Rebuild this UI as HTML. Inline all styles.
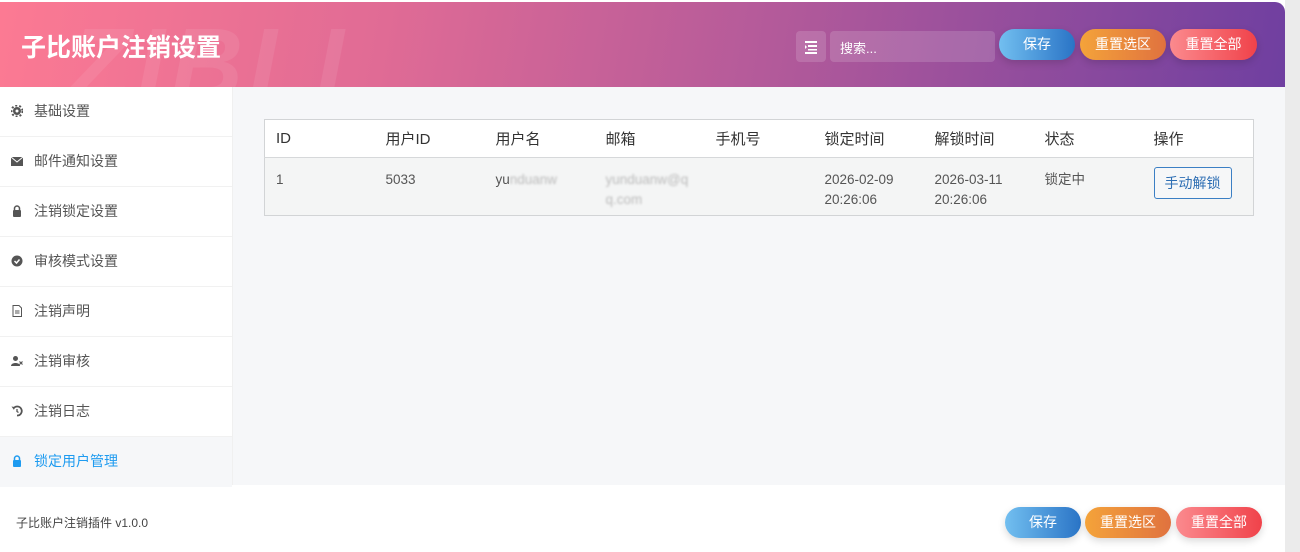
<!DOCTYPE html>
<html><head><meta charset="utf-8"><style>
*{box-sizing:border-box;margin:0;padding:0}
body{width:1300px;height:552px;background:#ebebeb;font-family:"Liberation Sans","Noto Sans CJK SC",sans-serif;position:relative;overflow:hidden}
.wrap{position:absolute;left:0;top:0;width:1285px;height:552px;background:#fff}
.hdr{position:absolute;left:0;top:2px;width:1285px;height:85px;border-radius:0 10px 0 0;background:linear-gradient(100deg,#fc7a93 0%,#e06b95 30%,#b35a9a 60%,#6f3fa0 100%);overflow:hidden}
.hdr h1{position:absolute;left:21px;top:26px;color:#fff;font-size:25px;font-weight:bold}
.wm{position:absolute;left:70px;top:12px;font-size:100px;line-height:100px;font-weight:900;font-style:italic;color:rgba(255,255,255,.08);letter-spacing:6px}
.ib{position:absolute;left:796px;top:29px;width:30px;height:31px;border-radius:4px;background:rgba(255,255,255,.15)}
.srch{position:absolute;left:830px;top:29px;width:165px;height:31px;border-radius:4px;background:rgba(255,255,255,.15);color:#fff;font-size:13px;padding:7px 10px}
.btn{position:absolute;height:31px;border-radius:16px;color:#fff;font-size:14px;text-align:center;line-height:31px;box-shadow:0 3px 8px rgba(0,0,0,.15)}
.b1{background:linear-gradient(90deg,#72bff0,#2a74c6)}
.b2{background:linear-gradient(90deg,#f4a33a,#e0723f)}
.b3{background:linear-gradient(90deg,#fb8a8e,#f0424a)}
.side{position:absolute;left:0;top:87px;width:233px;height:398px;background:#fff;border-right:1px solid #f0f0f0}
.it{height:50px;border-bottom:1px solid #f1f1f1;font-size:14px;color:#555;line-height:49px;padding-left:34px;position:relative}
.it .ic{position:absolute;left:11px;top:18px;width:12px;height:12px}
.it.act{background:#f6f7f9;color:#1e9bf0;border-bottom:none}
.main{position:absolute;left:233px;top:87px;width:1052px;height:398px;background:#f6f7f9}
table{position:absolute;left:31px;top:32px;width:990px;border-collapse:collapse;border:1px solid #d2d4d6;font-size:14px;color:#444}
th{background:#fff;font-weight:normal;text-align:left;height:38px;padding-left:11px;font-size:15px;color:#333;border-bottom:1px solid #d6d8da}
td{background:#f4f5f5;vertical-align:top;padding:12px 0 0 11px;height:58px;line-height:20px;font-size:13.5px;color:#555}
.ub{display:inline-block;border:1px solid #3b7fc4;color:#2f6fb4;border-radius:3px;padding:5px 10px;font-size:14px;background:#f6f7f8;margin-top:-3px}
.blur{color:#bbb;filter:blur(1px)}
.foot{position:absolute;left:16px;top:514px;font-size:12px;color:#444}
</style></head><body>
<div class="wrap">
<div class="hdr"><div class="wm">ZIBLL</div><h1>子比账户注销设置</h1>
<div class="ib"><svg width="30" height="31"><g fill="#fff"><rect x="9" y="10" width="12" height="2"/><rect x="12" y="14" width="9" height="2"/><rect x="12" y="18" width="9" height="1.5"/><rect x="9" y="21" width="12" height="2"/><path d="M9 14l2 2-2 2z"/></g></svg></div>
<div class="srch">搜索...</div>
<div class="btn b1" style="left:999px;top:27px;width:76px">保存</div>
<div class="btn b2" style="left:1080px;top:27px;width:86px">重置选区</div>
<div class="btn b3" style="left:1170px;top:27px;width:87px">重置全部</div>
</div>
<div class="side">
<div class="it"><svg class="ic" viewBox="0 0 12 12"><circle cx="6" cy="6" r="4" fill="#555"/><circle cx="6" cy="6" r="5.5" fill="none" stroke="#555" stroke-width="2" stroke-dasharray="2 2"/><circle cx="6" cy="6" r="1.5" fill="#fff"/></svg>基础设置</div>
<div class="it"><svg class="ic" viewBox="0 0 12 12"><rect x="0" y="2" width="12" height="9" fill="#555"/><path d="M0 2l6 5 6-5" stroke="#fff" fill="none"/></svg>邮件通知设置</div>
<div class="it"><svg class="ic" viewBox="0 0 12 12"><rect x="2" y="5" width="8" height="7" rx="1" fill="#555"/><path d="M3.5 5V3.5a2.5 2.5 0 015 0V5" stroke="#555" stroke-width="1.5" fill="none"/></svg>注销锁定设置</div>
<div class="it"><svg class="ic" viewBox="0 0 12 12"><circle cx="6" cy="6" r="5.5" fill="#555"/><path d="M3.5 6l2 2 3-3.5" stroke="#fff" stroke-width="1.5" fill="none"/></svg>审核模式设置</div>
<div class="it"><svg class="ic" viewBox="0 0 12 12"><path d="M2 .5h6l2.5 2.5v8.5H2z" stroke="#555" fill="none"/><path d="M4 6h4.5M4 8h4.5" stroke="#555"/></svg>注销声明</div>
<div class="it"><svg class="ic" viewBox="0 0 12 12"><circle cx="4.5" cy="3.5" r="2.5" fill="#555"/><path d="M0 11c0-4 9-4 9 0z" fill="#555"/><path d="M8.5 6.5l3 3M11.5 6.5l-3 3" stroke="#555" stroke-width="1.2"/></svg>注销审核</div>
<div class="it"><svg class="ic" viewBox="0 0 12 12"><path d="M2.5 3.5A4.5 4.5 0 116 10.5" stroke="#555" stroke-width="1.8" fill="none"/><path d="M0.5 1.5l3 .5-.5 3z" fill="#555"/><path d="M6 4v2.5l1.5 1" stroke="#555" stroke-width="1.3" fill="none"/></svg>注销日志</div>
<div class="it act"><svg class="ic" viewBox="0 0 12 12"><rect x="2" y="5" width="8" height="7" rx="1" fill="#1e9bf0"/><path d="M3.5 5V3.5a2.5 2.5 0 015 0V5" stroke="#1e9bf0" stroke-width="1.5" fill="none"/></svg>锁定用户管理</div>
</div>
<div class="main">
<table>
<tr><th style="width:110px">ID</th><th style="width:110px">用户ID</th><th style="width:110px">用户名</th><th style="width:110px">邮箱</th><th style="width:109px">手机号</th><th style="width:110px">锁定时间</th><th style="width:110px">解锁时间</th><th style="width:109px">状态</th><th>操作</th></tr>
<tr><td>1</td><td>5033</td><td>yu<span class="blur">nduanw</span></td><td><span class="blur">yunduanw@q<br>q.com</span></td><td></td><td>2026-02-09<br>20:26:06</td><td>2026-03-11<br>20:26:06</td><td>锁定中</td><td><span class="ub">手动解锁</span></td></tr>
</table>
</div>
<div class="foot">子比账户注销插件 v1.0.0</div>
<div class="btn b1" style="left:1005px;top:507px;width:76px">保存</div>
<div class="btn b2" style="left:1085px;top:507px;width:86px">重置选区</div>
<div class="btn b3" style="left:1176px;top:507px;width:86px">重置全部</div>
</div>
</body></html>
